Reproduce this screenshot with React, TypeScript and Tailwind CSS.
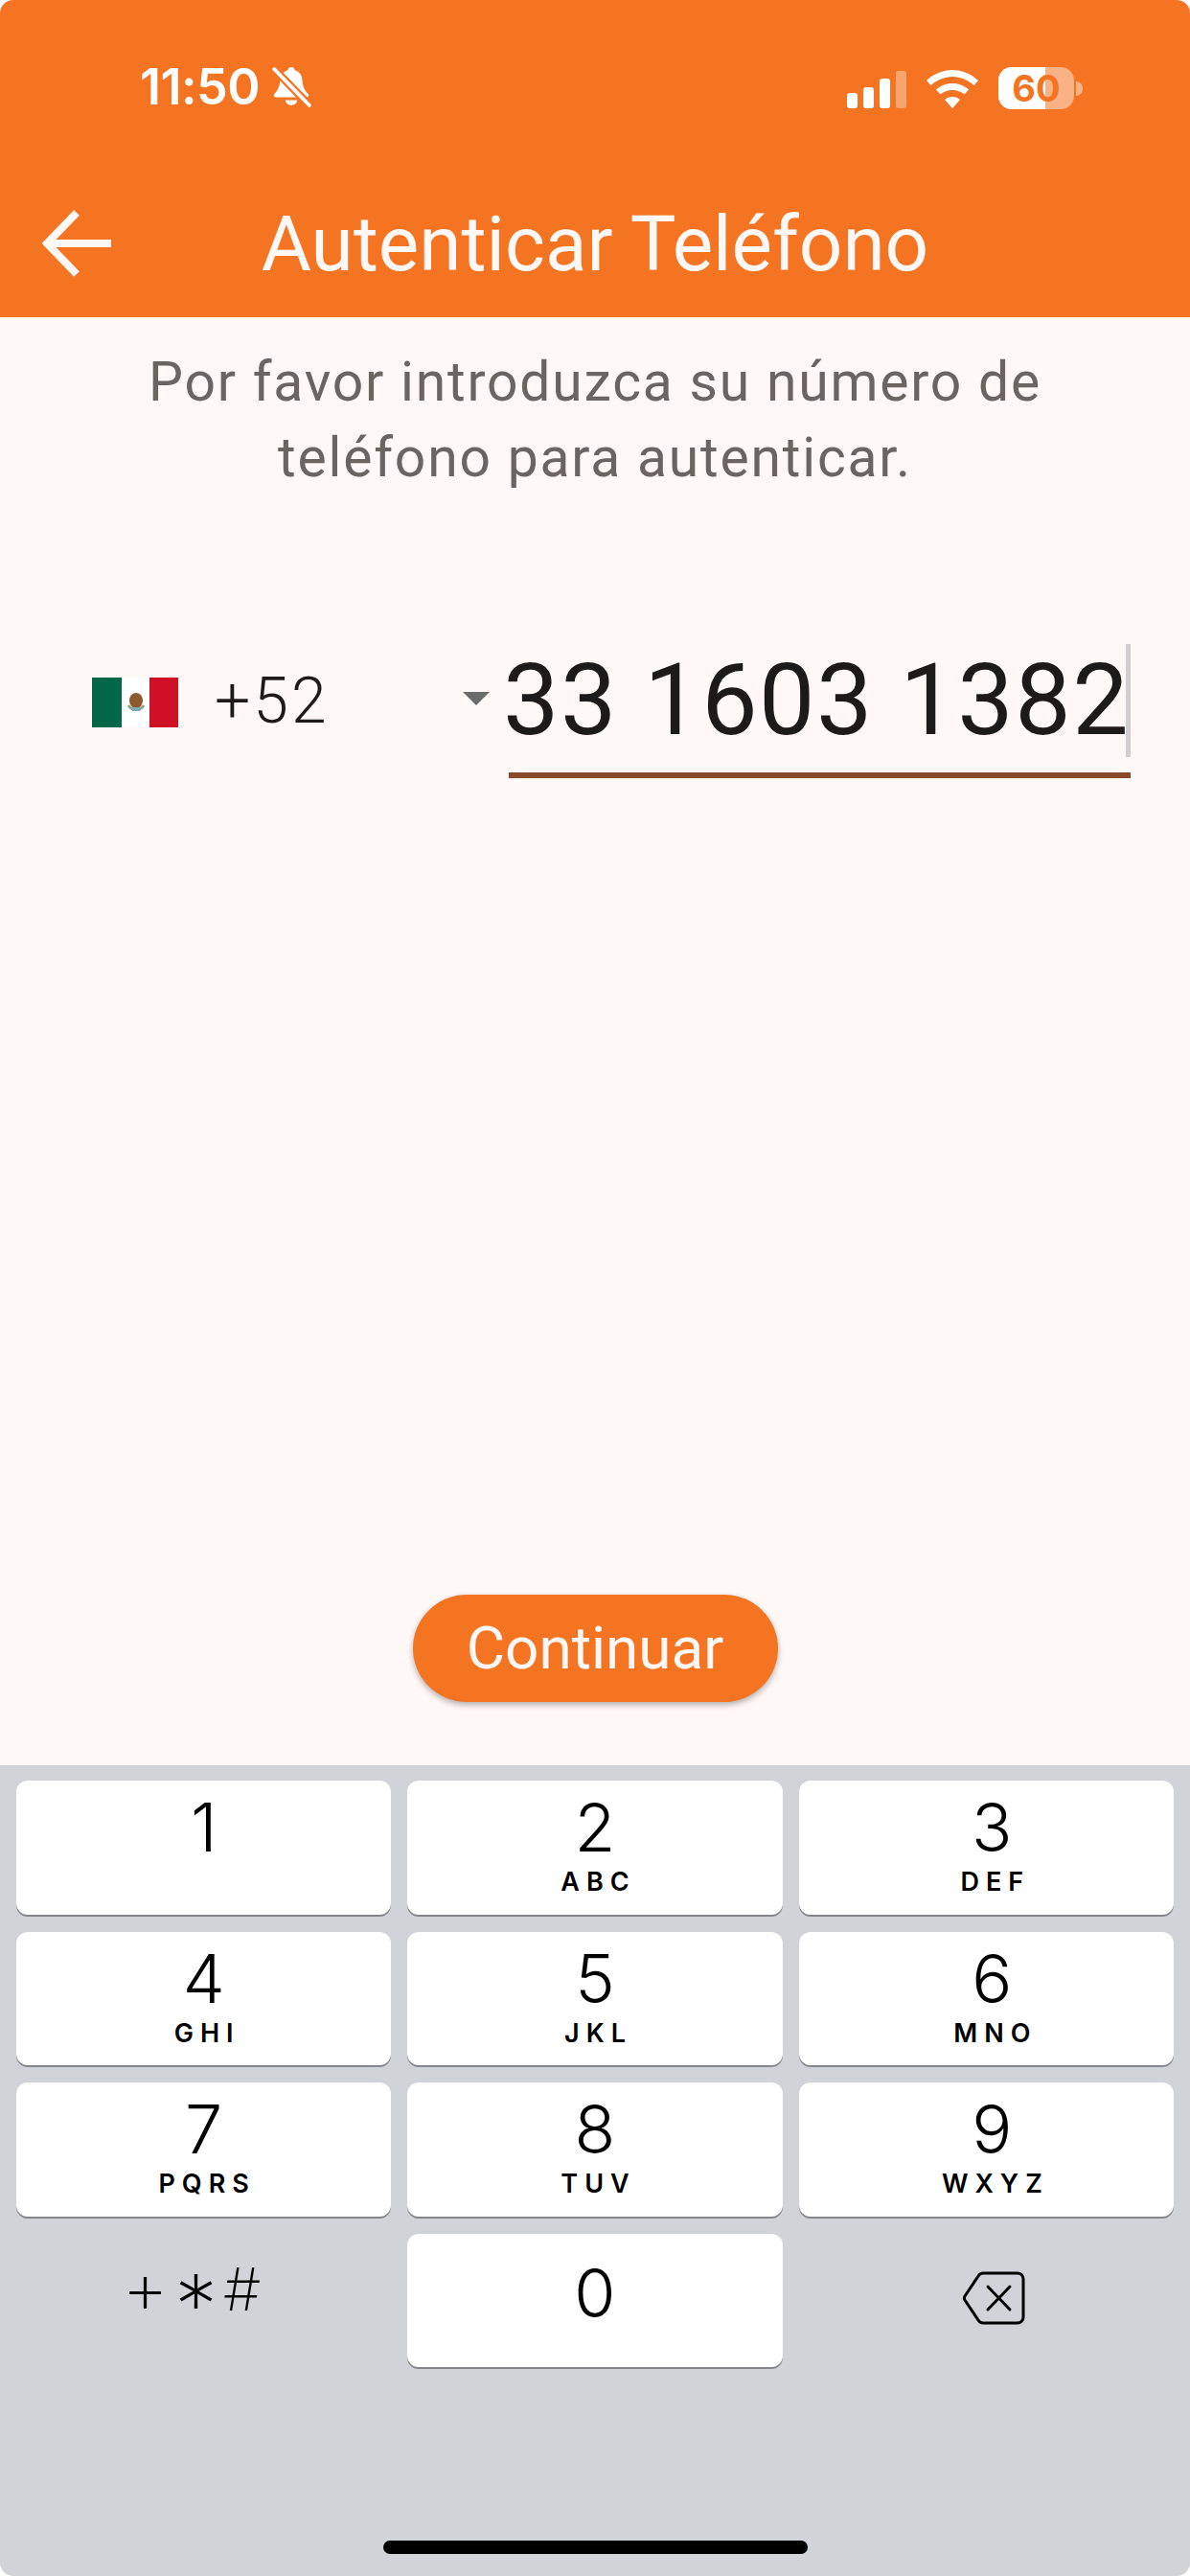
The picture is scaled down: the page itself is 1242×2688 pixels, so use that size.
import React from "react";

const keys: [string, string][] = [
  ["1", ""], ["2", "ABC"], ["3", "DEF"],
  ["4", "GHI"], ["5", "JKL"], ["6", "MNO"],
  ["7", "PQRS"], ["8", "TUV"], ["9", "WXYZ"],
];

function Key({ d, l, last }: { d: string; l: string; last: boolean }) {
  return (
    <div className={last ? "h-[139.5px] bg-white rounded-[12px] shadow-[0_2px_0_#85868b] flex flex-col items-center pt-[14px] pl-[12px]" : "h-[139.5px] bg-white rounded-[12px] shadow-[0_2px_0_#85868b] flex flex-col items-center pt-[14px]"}>
      <span className="text-[70px] leading-[70px] font-light text-black">{d}</span>
      {l && <span className="mt-[7px] text-[27px] leading-[30px] font-semibold tracking-[7px] pl-[7px] text-black">{l}</span>}
    </div>
  );
}

function Status() {
  return (
    <div className="h-[186px] pt-[64px] pl-[146px] pr-[112px] flex items-start justify-between">
      <div className="flex items-center gap-[12px] h-[54px]">
        <span className="text-[52px] leading-[54px] font-semibold text-white tracking-[-0.5px]">11:50</span>
        <svg width="42" height="44" viewBox="0 0 40 42" fill="none">
          <path d="M20 1c2 0 3 1 3.500 3 5 1.500 7 5 7.500 10 .5 6 2 10 6 14 1 2 0 3-2 3H5c-2 0-3-1-2-3 3-3 5-7 6-13 .5-6 3-9.500 7.500-11C17 2 18 1 20 1z" fill="#fff" />
          <path d="M14 34h12c-.5 3-3 5-6 5s-5.500-2-6-5z" fill="#fff" />
          <path d="M3 3l35 36" stroke="#f57422" strokeWidth="8" />
          <path d="M3 3l35 36" stroke="#fff" strokeWidth="3.500" strokeLinecap="round" />
        </svg>
      </div>
      <div className="flex items-center h-[54px]">
        <svg width="62" height="39" viewBox="0 0 62 39" fill="#fff" className="mt-[4px]">
          <rect x="0" y="23" width="11" height="16" rx="3" />
          <rect x="17" y="17" width="11" height="22" rx="3" />
          <rect x="34" y="8" width="11" height="31" rx="3" />
          <rect x="51" y="0" width="11" height="39" rx="3" opacity="0.35" />
        </svg>
        <svg width="54" height="40" viewBox="0 0 54 40" fill="#fff" className="ml-[21px] mt-[4px]">
          <path d="M27 0c10 0 19.500 4 27 11l-4.500 5C43 10.500 35.500 7 27 7S11 10.500 4.500 16L0 11C7.500 4 17 0 27 0z" />
          <path d="M27 14c6.500 0 12.500 2.500 17 6.500l-4.500 5C36 22.500 32 21 27 21s-9 1.500-12.500 4.500L10 20.500C14.500 16.500 20.500 14 27 14z" />
          <path d="M27 28c3 0 6 1 8 3L27 40l-8-9c2-2 5-3 8-3z" />
        </svg>
        <div className="relative ml-[21px] w-[79px] h-[44px] rounded-[14px] bg-white/45 overflow-hidden mt-[2px]">
          <div className="h-full w-[49px] bg-white" />
          <span className="absolute inset-0 flex items-center justify-center text-[38px] leading-[44px] font-bold text-[#f57422]">60</span>
        </div>
        <div className="w-[7px] h-[15px] ml-[2px] mt-[2px] rounded-r-full bg-white/45" />
      </div>
    </div>
  );
}

export default function App() {
  return (
    <div className="w-[1242px] h-[2688px] flex flex-col bg-white overflow-hidden" style={{ fontFamily: "Inter, 'Noto Sans', sans-serif" }}>
      <div className="h-[331px] bg-[#f57422] rounded-t-[14px] flex flex-col">
        <Status />
        <div className="relative flex items-center justify-center h-[100px] mt-[14px]">
          <svg width="72" height="70" viewBox="0 0 72 70" fill="none" className="absolute left-[44px] top-[19px]">
            <path d="M36 3L5 35l31 32M5 35h67" stroke="#fff8f6" strokeWidth="8" />
          </svg>
          <span className="pt-[10px] text-[80px] leading-[100px] font-normal text-[#fff8f6]" style={{ fontFamily: "Roboto, sans-serif" }}>Autenticar Teléfono</span>
        </div>
      </div>
      <div className="flex-1 flex flex-col bg-[#fff8f6]" style={{ fontFamily: "Roboto, sans-serif" }}>
        <p className="mt-[28px] text-center text-[57px] leading-[79px] tracking-[1.8px] text-[#6b6562]">
          Por favor introduzca su número de
          <br />
          teléfono para autenticar.
        </p>
        <div className="mt-[155px] flex items-start pl-[96px]">
          <div className="mt-[35px] w-[90px] h-[52px] flex shrink-0">
            <div className="w-[31px] bg-[#006847]" />
            <div className="w-[29px] bg-white flex items-center justify-center">
              <svg width="22" height="24" viewBox="0 0 22 24">
                <path d="M3 15a9 8 0 0 0 16 0" fill="none" stroke="#8fa58b" strokeWidth="3" />
                <ellipse cx="11" cy="10" rx="7" ry="8" fill="#8a5a2e" />
                <path d="M5 17h12l-2 4H7z" fill="#7fa9b5" />
              </svg>
            </div>
            <div className="w-[30px] bg-[#ce1126]" />
          </div>
          <div className="ml-[38px] w-[287px] shrink-0 flex items-start justify-between">
            <span className="mt-[25px] text-[66px] leading-[70px] font-light tracking-[3px] text-[#1d1b1a]">+52</span>
            <div className="mt-[50px] w-0 h-0 border-l-[14px] border-r-[14px] border-t-[14px] border-l-transparent border-r-transparent border-t-[#6b6b6b]" />
          </div>
          <div className="relative ml-[20px] w-[649px] h-[140px] border-b-[6px] border-[#8a4a2c]">
            <span className="block -ml-[6px] text-[104px] leading-[118px] text-[#1d1b1a] tracking-[1.5px] whitespace-nowrap">33 1603 1382</span>
            <div className="absolute right-0 top-0 w-[5px] h-[118px] bg-[#cfcfcf]" />
          </div>
        </div>
        <div className="mt-auto mb-[66px] flex justify-center">
          <div className="w-[381px] h-[112px] rounded-full bg-[#f57422] shadow-[0_3px_6px_rgba(0,0,0,0.3)] flex items-center justify-center">
            <span className="text-[62px] leading-[66px] text-[#fff8f6]">Continuar</span>
          </div>
        </div>
      </div>
      <div className="h-[846px] bg-[#d1d3d9] rounded-b-[14px] pt-[16px] flex flex-col">
        <div className="px-[17px] grid grid-cols-3 gap-x-[17px] gap-y-[18px]">
          {keys.map(([d, l], i) => <Key key={d} d={d} l={l} last={i % 3 === 2} />)}
          <div className="flex items-center justify-center h-[139.5px] pb-[28px] pr-[26px] font-extralight text-black gap-[6px]">
            <span className="text-[76px] leading-[66px]">+</span>
            <span className="text-[90px] leading-[66px] pt-[40px]">*</span>
            <span className="text-[62px] leading-[66px] pt-[6px]">#</span>
          </div>
          <div className="h-[139.5px] bg-white rounded-[12px] shadow-[0_2px_0_#85868b] flex flex-col items-center pt-[27px]">
            <span className="text-[70px] leading-[70px] font-light text-black">0</span>
          </div>
          <div className="flex items-center justify-center h-[139.5px] pb-[5px] pl-[16px]">
            <svg width="66" height="56" viewBox="0 0 66 56" fill="none" stroke="#000" strokeWidth="3">
              <path d="M22 2h36a6 6 0 0 1 6 6v40a6 6 0 0 1-6 6H22a6 6 0 0 1-5-3L3 30a4 4 0 0 1 0-4L17 5a6 6 0 0 1 5-3z" />
              <path d="M27 16l23 24M50 16L27 40" strokeLinecap="round" />
            </svg>
          </div>
        </div>
        <div className="mt-auto mb-[23px] mx-auto w-[443px] h-[14px] rounded-full bg-black" />
      </div>
    </div>
  );
}
